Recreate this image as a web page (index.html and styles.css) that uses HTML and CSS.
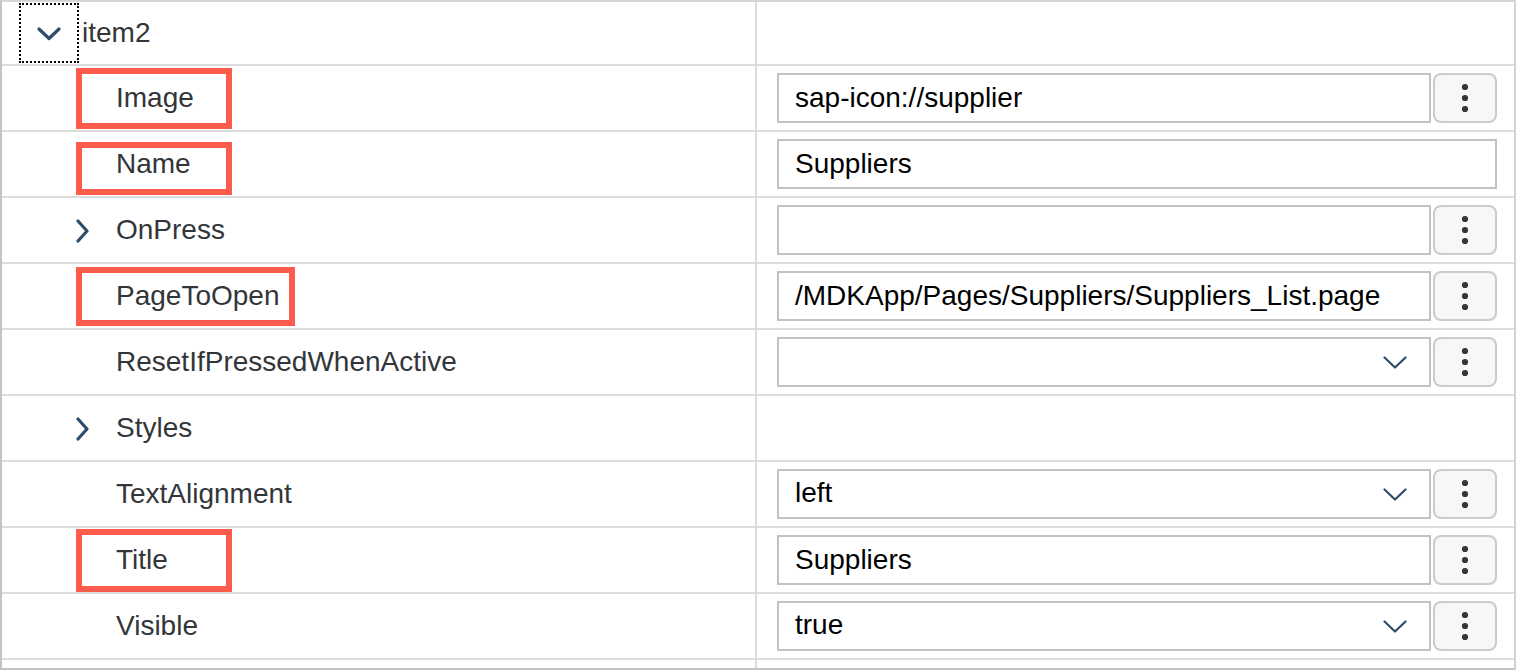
FILE: index.html
```html
<!DOCTYPE html>
<html lang="en">
<head>
<meta charset="utf-8">
<title>Properties</title>
<link rel="stylesheet" href="styles.css">
</head>
<body>
<div class="grid">
  <div class="row row-first">
    <div class="name">
      <span class="focus">
        <svg class="chev-down" width="24" height="14" viewBox="0 0 24 14"><path d="M2 2 L12 11.5 L22 2" fill="none" stroke="#2f4d6b" stroke-width="3.2" stroke-linecap="round" stroke-linejoin="round"/></svg>
      </span>
      <span class="label label-head">item2</span>
    </div>
    <div class="value"></div>
  </div>

  <div class="row">
    <div class="name child">
      <span class="toggle"></span><span class="label">Image</span>
      <span class="mark mark-image"></span>
    </div>
    <div class="value">
      <div class="field">sap-icon://supplier</div>
      <button class="more"><svg width="8" height="30" viewBox="0 0 8 30"><circle cx="4" cy="4" r="3.1" fill="#32363a"/><circle cx="4" cy="15" r="3.1" fill="#32363a"/><circle cx="4" cy="26" r="3.1" fill="#32363a"/></svg></button>
    </div>
  </div>

  <div class="row">
    <div class="name child">
      <span class="toggle"></span><span class="label">Name</span>
      <span class="mark mark-name"></span>
    </div>
    <div class="value">
      <div class="field">Suppliers</div>
    </div>
  </div>

  <div class="row">
    <div class="name child">
      <span class="toggle"><svg width="16" height="24" viewBox="0 0 16 24"><path d="M3 2 L12 12 L3 22" fill="none" stroke="#2f4d6b" stroke-width="3.2" stroke-linecap="round" stroke-linejoin="round"/></svg></span><span class="label">OnPress</span>
    </div>
    <div class="value">
      <div class="field"></div>
      <button class="more"><svg width="8" height="30" viewBox="0 0 8 30"><circle cx="4" cy="4" r="3.1" fill="#32363a"/><circle cx="4" cy="15" r="3.1" fill="#32363a"/><circle cx="4" cy="26" r="3.1" fill="#32363a"/></svg></button>
    </div>
  </div>

  <div class="row">
    <div class="name child">
      <span class="toggle"></span><span class="label">PageToOpen</span>
      <span class="mark mark-page"></span>
    </div>
    <div class="value">
      <div class="field">/MDKApp/Pages/Suppliers/Suppliers_List.page</div>
      <button class="more"><svg width="8" height="30" viewBox="0 0 8 30"><circle cx="4" cy="4" r="3.1" fill="#32363a"/><circle cx="4" cy="15" r="3.1" fill="#32363a"/><circle cx="4" cy="26" r="3.1" fill="#32363a"/></svg></button>
    </div>
  </div>

  <div class="row">
    <div class="name child">
      <span class="toggle"></span><span class="label">ResetIfPressedWhenActive</span>
    </div>
    <div class="value">
      <div class="field field-select"><span class="sel-text"></span><svg class="sel-chev" width="24" height="14" viewBox="0 0 24 14"><path d="M1.5 1.5 L12 11.5 L22.5 1.5" fill="none" stroke="#2f4d6b" stroke-width="2.2" stroke-linecap="round" stroke-linejoin="round"/></svg></div>
      <button class="more"><svg width="8" height="30" viewBox="0 0 8 30"><circle cx="4" cy="4" r="3.1" fill="#32363a"/><circle cx="4" cy="15" r="3.1" fill="#32363a"/><circle cx="4" cy="26" r="3.1" fill="#32363a"/></svg></button>
    </div>
  </div>

  <div class="row">
    <div class="name child">
      <span class="toggle"><svg width="16" height="24" viewBox="0 0 16 24"><path d="M3 2 L12 12 L3 22" fill="none" stroke="#2f4d6b" stroke-width="3.2" stroke-linecap="round" stroke-linejoin="round"/></svg></span><span class="label">Styles</span>
    </div>
    <div class="value"></div>
  </div>

  <div class="row">
    <div class="name child">
      <span class="toggle"></span><span class="label">TextAlignment</span>
    </div>
    <div class="value">
      <div class="field field-select"><span class="sel-text">left</span><svg class="sel-chev" width="24" height="14" viewBox="0 0 24 14"><path d="M1.5 1.5 L12 11.5 L22.5 1.5" fill="none" stroke="#2f4d6b" stroke-width="2.2" stroke-linecap="round" stroke-linejoin="round"/></svg></div>
      <button class="more"><svg width="8" height="30" viewBox="0 0 8 30"><circle cx="4" cy="4" r="3.1" fill="#32363a"/><circle cx="4" cy="15" r="3.1" fill="#32363a"/><circle cx="4" cy="26" r="3.1" fill="#32363a"/></svg></button>
    </div>
  </div>

  <div class="row">
    <div class="name child">
      <span class="toggle"></span><span class="label">Title</span>
      <span class="mark mark-title"></span>
    </div>
    <div class="value">
      <div class="field">Suppliers</div>
      <button class="more"><svg width="8" height="30" viewBox="0 0 8 30"><circle cx="4" cy="4" r="3.1" fill="#32363a"/><circle cx="4" cy="15" r="3.1" fill="#32363a"/><circle cx="4" cy="26" r="3.1" fill="#32363a"/></svg></button>
    </div>
  </div>

  <div class="row">
    <div class="name child">
      <span class="toggle"></span><span class="label">Visible</span>
    </div>
    <div class="value">
      <div class="field field-select"><span class="sel-text">true</span><svg class="sel-chev" width="24" height="14" viewBox="0 0 24 14"><path d="M1.5 1.5 L12 11.5 L22.5 1.5" fill="none" stroke="#2f4d6b" stroke-width="2.2" stroke-linecap="round" stroke-linejoin="round"/></svg></div>
      <button class="more"><svg width="8" height="30" viewBox="0 0 8 30"><circle cx="4" cy="4" r="3.1" fill="#32363a"/><circle cx="4" cy="15" r="3.1" fill="#32363a"/><circle cx="4" cy="26" r="3.1" fill="#32363a"/></svg></button>
    </div>
  </div>

  <div class="tail">
    <div class="tail-name"></div>
  </div>
</div>
</body>
</html>
```

FILE: styles.css
```css
html, body {
  margin: 0;
  padding: 0;
  background: #ffffff;
}

body {
  font-family: "Liberation Sans", Arial, Helvetica, sans-serif;
  overflow: hidden;
}

.grid {
  width: 1516px;
  box-sizing: border-box;
  border-left: 2px solid #c4c4c4;
  border-right: 2px solid #d2d2d2;
  border-top: 2px solid #d6d6d6;
}

.row {
  display: flex;
  height: 66px;
  box-sizing: border-box;
  border-bottom: 2px solid #dcdcdc;
}

.row-first {
  height: 64px;
}

.name {
  width: 753px;
  flex: none;
  border-right: 2px solid #dcdcdc;
  display: flex;
  align-items: center;
  position: relative;
  font-size: 28px;
  color: #32363a;
}

.child {
  padding-left: 73px;
  box-sizing: content-box;
  width: 680px;
}

.toggle {
  width: 41px;
  flex: none;
  display: flex;
  align-items: center;
}

.toggle svg {
  display: block;
  margin-left: 0;
  margin-top: 1px;
}

.label {
  white-space: nowrap;
  line-height: 32px;
}

.focus {
  margin-left: 17px;
  width: 60px;
  height: 60px;
  box-sizing: border-box;
  border: 2px dotted #000000;
  display: flex;
  align-items: center;
  justify-content: center;
  flex: none;
}

.chev-down {
  display: block;
  margin-top: 1px;
}

.label-head {
  margin-left: 3px;
}

.value {
  flex: 1;
  display: flex;
  align-items: center;
  gap: 2px;
  padding: 0 17px 0 20px;
}

.field {
  flex: 1;
  height: 50px;
  box-sizing: border-box;
  border: 2px solid #c2c2c2;
  background: #ffffff;
  display: flex;
  align-items: center;
  padding: 0 14px 0 16px;
  font-size: 28px;
  color: #000000;
  white-space: nowrap;
  overflow: hidden;
}

.field-select {
  padding-right: 22px;
}

.sel-text {
  flex: 1;
  margin-top: -3px;
}

.sel-chev {
  display: block;
  flex: none;
  margin-top: 2px;
}

.more {
  width: 64px;
  height: 50px;
  flex: none;
  box-sizing: border-box;
  border: 2px solid #cbcbcb;
  border-radius: 8px;
  background: #f7f7f7;
  padding: 0;
  margin: 0;
  display: flex;
  align-items: center;
  justify-content: center;
}

.more svg {
  display: block;
}

.mark {
  position: absolute;
  left: 74px;
  width: 156px;
  box-sizing: border-box;
  border: 6px solid #fd5b4c;
  pointer-events: none;
}

.mark-image {
  top: 2px;
  height: 61px;
}

.mark-name {
  top: 10px;
  height: 53px;
}

.mark-page {
  top: 3px;
  height: 59px;
  width: 219px;
}

.mark-title {
  top: 1px;
  height: 63px;
}

.tail {
  display: flex;
  height: 10px;
  box-sizing: border-box;
  border-bottom: 2px solid #c4c4c4;
}

.tail-name {
  width: 753px;
  border-right: 2px solid #dcdcdc;
}
```
